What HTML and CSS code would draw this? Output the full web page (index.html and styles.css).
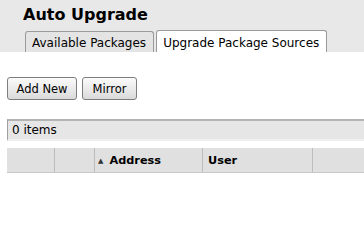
FILE: index.html
```html
<!DOCTYPE html>
<html>
<head>
<meta charset="utf-8">
<link rel="stylesheet" href="styles.css">
</head>
<body>
<div class="header">
  <h1 class="title">Auto Upgrade</h1>
  <div class="tabs">
    <div class="tab">Available Packages</div>
    <div class="tab active">Upgrade Package Sources</div>
  </div>
</div>
<div class="content">
  <div class="toolbar">
    <button class="btn">Add New</button>
    <button class="btn">Mirror</button>
  </div>
  <div class="status">0 items</div>
  <div class="thead">
    <div class="th c1"></div>
    <div class="th c2"></div>
    <div class="th c3"><span class="arrow">&#9650;</span>Address</div>
    <div class="th c4">User</div>
    <div class="th c5"></div>
  </div>
</div>
</body>
</html>
```
FILE: styles.css
```css
html, body {
  margin: 0;
  padding: 0;
  background: #fff;
  font-family: "DejaVu Sans", Verdana, sans-serif;
  color: #000;
  overflow: hidden;
}
.header {
  background: #e8e8e8;
  height: 52px;
  padding-top: 5px;
  box-sizing: border-box;
}
.title {
  margin: 0 0 0 23px;
  font-size: 16px;
  font-weight: bold;
  line-height: 19px;
}
.tabs {
  display: flex;
  margin: 6px 0 0 25px;
  gap: 2px;
  align-items: flex-end;
}
.tab {
  height: 21px;
  box-sizing: border-box;
  border: 1px solid #9a9a9a;
  border-bottom: none;
  border-radius: 3px 3px 0 0;
  padding: 3px 7px 0 6px;
  font-size: 12px;
  line-height: 16px;
  background: #e4e4e4;
  white-space: nowrap;
}
.tab.active {
  background: #fff;
  height: 22px;
  padding-top: 4px;
}
.content {
  padding: 25px 0 0 7px;
}
.toolbar {
  display: flex;
  gap: 5px;
}
.btn {
  height: 23px;
  padding: 0;
  margin: 0;
  border: 1px solid #7e7e7e;
  border-radius: 3px;
  background: linear-gradient(#fbfbfb, #dadada);
  font-family: "DejaVu Sans", Verdana, sans-serif;
  font-size: 11.5px;
  color: #000;
  white-space: nowrap;
}
.btn:first-child {
  width: 70px;
}
.btn:last-child {
  width: 55px;
}
.status {
  margin-top: 19px;
  height: 22px;
  box-sizing: border-box;
  border-top: 2px solid #b4b4b4;
  border-left: 1px solid #a0a0a0;
  border-bottom: 2px solid #efefef;
  background: #e6e6e6;
  font-size: 12px;
  line-height: 18px;
  padding-left: 4px;
}
.thead {
  display: flex;
  margin-top: 7px;
  height: 24px;
  background: #e0e0e0;
  border-bottom: 1px solid #c8c8c8;
}
.th {
  box-sizing: border-box;
  border-right: 1px solid #bdbdbd;
  font-size: 11.3px;
  font-weight: bold;
  line-height: 22px;
  padding: 2px 0 0 3px;
  white-space: nowrap;
}
.c1 { width: 48px; }
.c2 { width: 40px; }
.c3 { width: 108px; }
.c4 { width: 110px; padding-left: 5px; }
.c5 { flex: 1; border-right: none; }
.arrow {
  font-size: 7px;
  vertical-align: 1px;
  color: #333;
  margin-right: 6px;
}
```
